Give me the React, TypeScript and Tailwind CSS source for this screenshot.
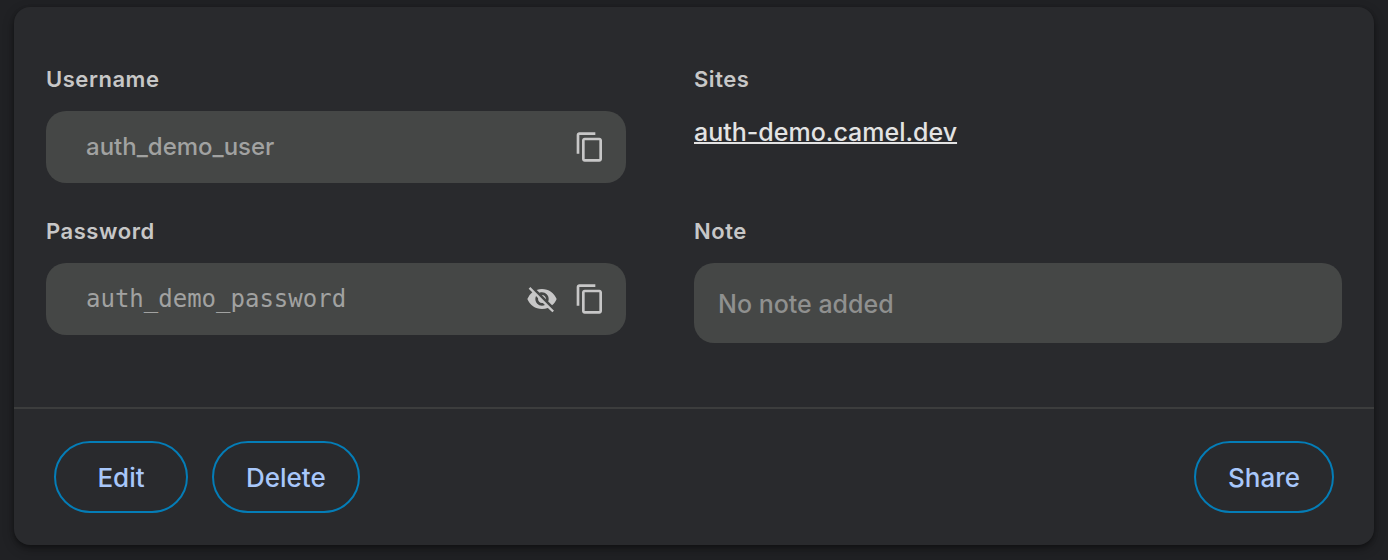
import { useState } from "react";
import { MdContentCopy, MdVisibility, MdVisibilityOff } from "react-icons/md";

type Credential = {
  username: string;
  password: string;
  site: string;
  note: string;
};

const CREDENTIAL: Credential = {
  username: "auth_demo_user",
  password: "auth_demo_password",
  site: "auth-demo.camel.dev",
  note: "",
};

const LABEL_CLASS =
  "block text-[22px] leading-8 font-semibold tracking-wide text-[#c7c7c7]";

function IconButton({
  label,
  onClick,
  children,
}: {
  label: string;
  onClick: () => void;
  children: React.ReactNode;
}) {
  return (
    <button
      type="button"
      aria-label={label}
      onClick={onClick}
      className="shrink-0 cursor-pointer text-[32px] text-[#c7c7c7]"
    >
      {children}
    </button>
  );
}

function CredentialField({
  id,
  label,
  value,
  type = "text",
  mono = false,
  children,
}: {
  id: string;
  label: string;
  value: string;
  type?: string;
  mono?: boolean;
  children: React.ReactNode;
}) {
  return (
    <div className="pr-[68px]">
      <label htmlFor={id} className={LABEL_CLASS}>
        {label}
      </label>
      <div className="mt-4 flex h-18 items-center gap-4 rounded-[20px] bg-[#454746] pr-5 pl-10">
        <input
          id={id}
          type={type}
          value={value}
          readOnly
          className={`min-w-0 flex-1 bg-transparent text-2xl text-[#a1a2a1] outline-none ${
            mono ? "font-['DejaVu_Sans_Mono',monospace]" : "font-medium"
          }`}
        />
        {children}
      </div>
    </div>
  );
}

function ActionButton({ children }: { children: React.ReactNode }) {
  return (
    <button
      type="button"
      className="h-18 min-w-[134px] cursor-pointer rounded-full border-2 border-[#047db7] px-8 text-[26px] font-medium text-[#a8c7fa]"
    >
      {children}
    </button>
  );
}

export default function App() {
  const [visible, setVisible] = useState(true);

  const copy = (text: string) => {
    navigator.clipboard?.writeText(text);
  };

  return (
    <main className="min-h-screen bg-[#202124] px-3.5 pt-[7px] pb-[15px] font-['Inter',sans-serif]">
      <section className="rounded-2xl bg-[#292a2d] shadow-[0_2px_4px_rgba(0,0,0,0.3),0_4px_12px_rgba(0,0,0,0.3)]">
        <div className="grid grid-cols-2 gap-y-8 px-8 pt-14 pb-16">
          <CredentialField
            id="username"
            label="Username"
            value={CREDENTIAL.username}
          >
            <IconButton
              label="Copy username"
              onClick={() => copy(CREDENTIAL.username)}
            >
              <MdContentCopy />
            </IconButton>
          </CredentialField>

          <div>
            <h2 className={LABEL_CLASS}>Sites</h2>
            <a
              href="https://auth-demo.camel.dev"
              className="mt-5 inline-block text-[25px] leading-[34px] font-medium text-[#e3e3e3] underline decoration-2"
            >
              {CREDENTIAL.site}
            </a>
          </div>

          <CredentialField
            id="password"
            label="Password"
            value={CREDENTIAL.password}
            type={visible ? "text" : "password"}
            mono
          >
            <IconButton
              label={visible ? "Hide password" : "Show password"}
              onClick={() => setVisible(!visible)}
            >
              {visible ? <MdVisibilityOff /> : <MdVisibility />}
            </IconButton>
            <IconButton
              label="Copy password"
              onClick={() => copy(CREDENTIAL.password)}
            >
              <MdContentCopy />
            </IconButton>
          </CredentialField>

          <div>
            <label htmlFor="note" className={LABEL_CLASS}>
              Note
            </label>
            <textarea
              id="note"
              rows={1}
              readOnly
              value={CREDENTIAL.note}
              placeholder="No note added"
              className="mt-4 block w-full resize-none rounded-[20px] bg-[#454746] px-6 pt-6 pb-[22px] text-[25px] leading-[34px] font-medium text-[#e3e3e3] outline-none placeholder:text-[#8f908f]"
            />
          </div>
        </div>

        <footer className="flex items-center gap-6 border-t-2 border-[#3c3d3d] px-10 py-8">
          <ActionButton>Edit</ActionButton>
          <ActionButton>Delete</ActionButton>
          <div className="ml-auto">
            <ActionButton>Share</ActionButton>
          </div>
        </footer>
      </section>
    </main>
  );
}
